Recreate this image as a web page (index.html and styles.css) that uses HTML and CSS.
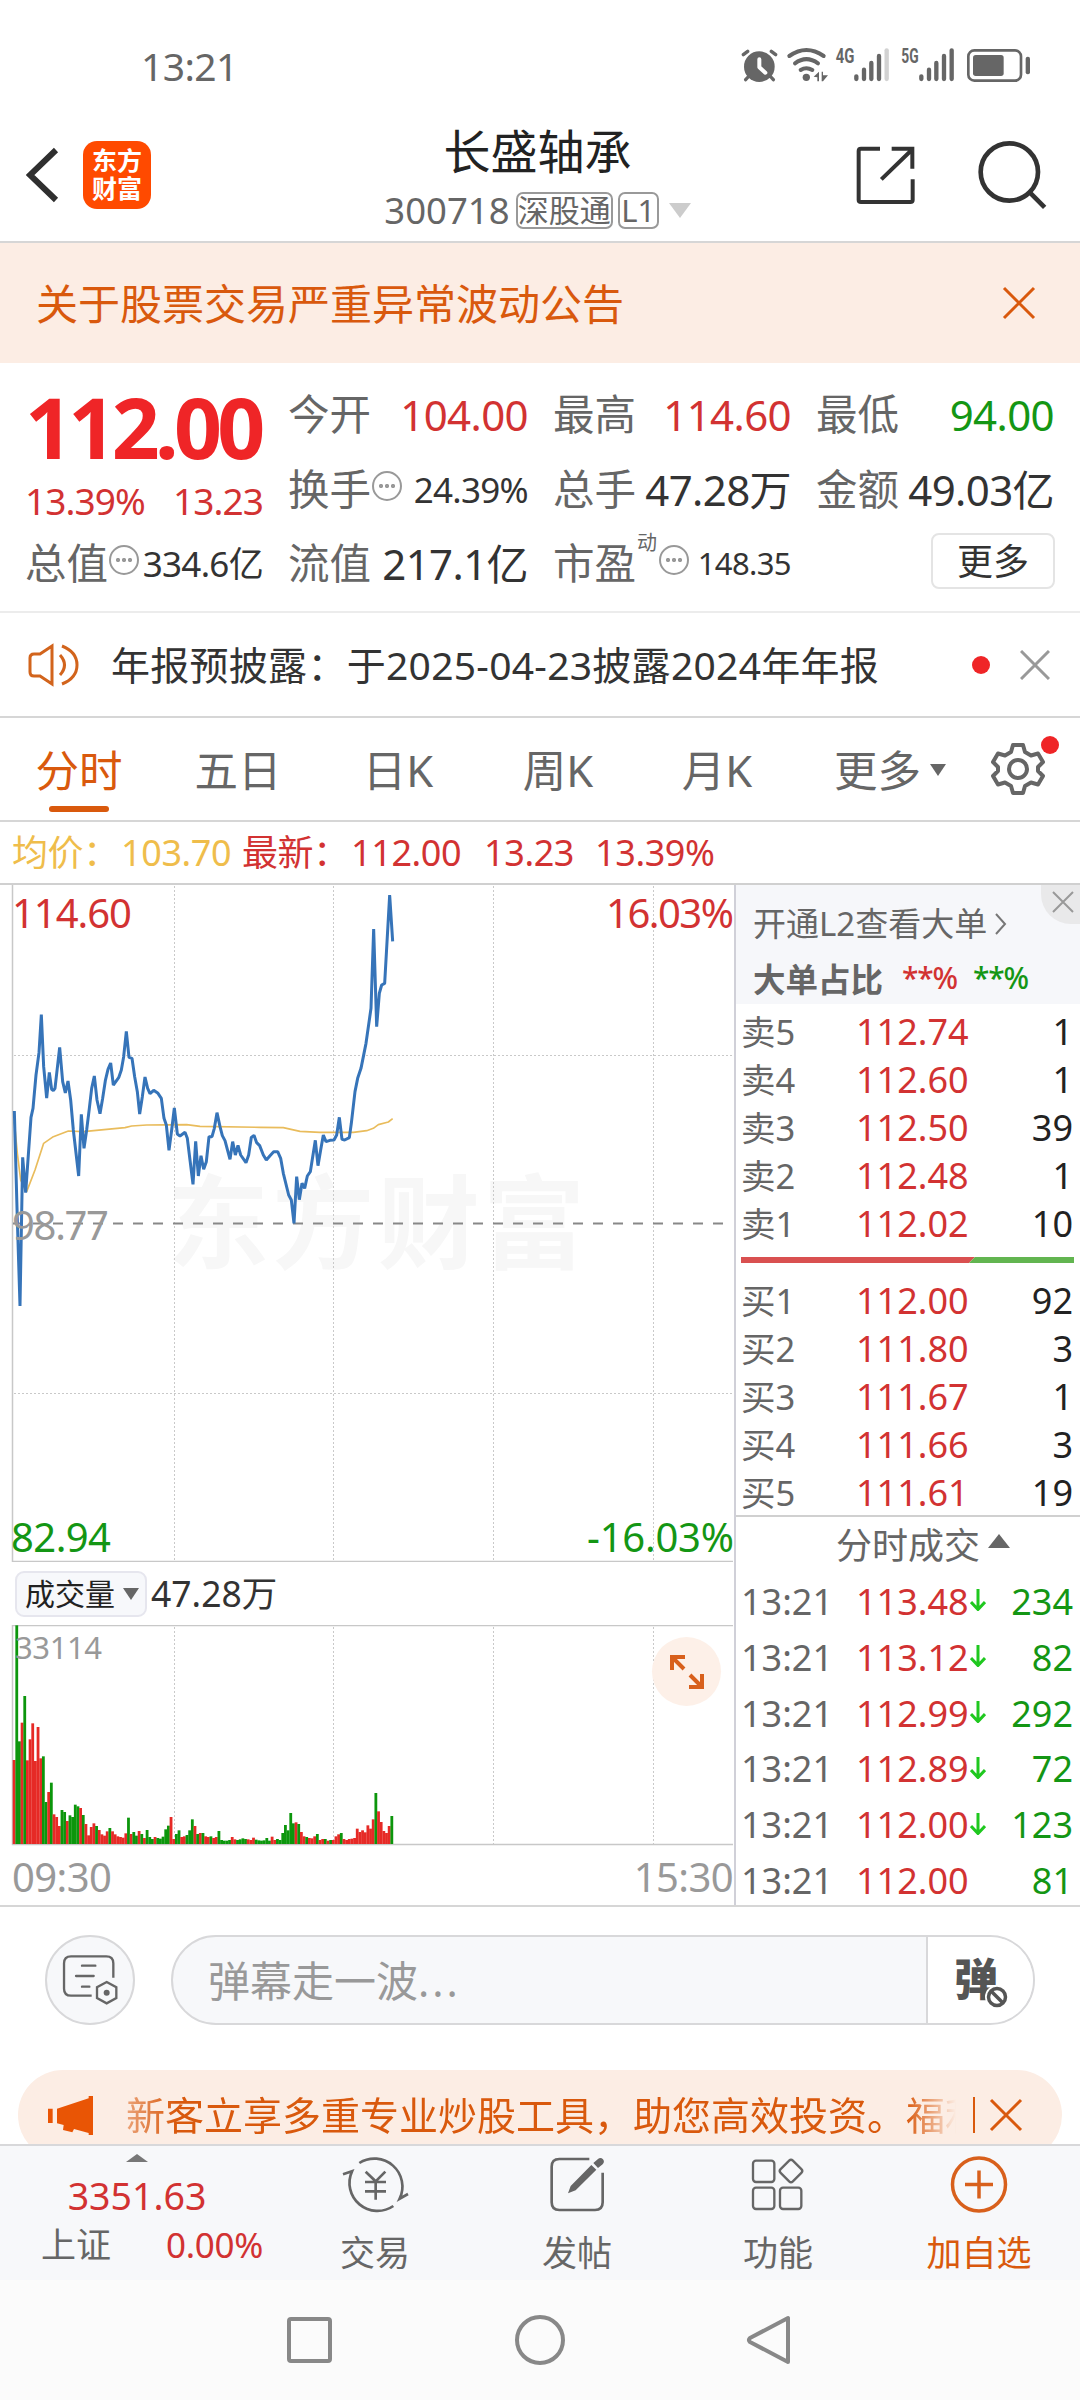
FILE: index.html
```html
<!DOCTYPE html>
<html lang="zh-CN">
<head>
<meta charset="utf-8">
<title>长盛轴承 300718</title>
<link rel="stylesheet" href="styles.css">
</head>
<body>
<div class="phone">
  <div class="status">
    <span class="clock">13:21</span>
    <svg class="status-icons" viewBox="15 18 885 111" width="295" height="37" fill="#666" stroke="none">
      <circle cx="73" cy="80" r="46"/>
      <path d="M25 44L38 34M122 44L109 34M42 108L32 119M105 108L115 119" stroke="#666" stroke-width="10" stroke-linecap="round"/>
      <path d="M73 58V82L91 98" fill="none" stroke="#fff" stroke-width="12" stroke-linecap="round" stroke-linejoin="round"/>
      <path d="M163 48Q214 12 266 48M180 70Q214 45 249 70M197 90Q214 79 232 90" fill="none" stroke="#666" stroke-width="12" stroke-linecap="round"/>
      <circle cx="214" cy="112" r="11"/>
      <path d="M236 110L252 95V124H247V112ZM260 95H264V106H279L264 124H260Z"/>
      <text class="net" x="302" y="68" textLength="56" lengthAdjust="spacingAndGlyphs">4G</text>
      <text class="net" x="499" y="68" textLength="52" lengthAdjust="spacingAndGlyphs">5G</text>
      <g stroke="#666" stroke-width="13" stroke-linecap="round">
        <path d="M364 109V117M387 89V117M409 69V117M432 48V117"/>
        <path d="M455 31V117" stroke="#d2d2d2"/>
        <path d="M559 109V117M582 89V117M604 69V117M627 48V117M650 31V117"/>
      </g>
      <rect x="700" y="31" width="158" height="91" rx="18" fill="none" stroke="#666" stroke-width="8"/>
      <rect x="714" y="45" width="92" height="63" rx="8"/>
      <rect x="872" y="50" width="13" height="53" rx="6"/>
    </svg>
  </div>

  <header class="header">
    <svg class="back" viewBox="0 0 34 58" width="34" height="58"><path d="M30 4L4 29L30 54" fill="none" stroke="#2f2f2f" stroke-width="6"/></svg>
    <div class="logo"><span>东方</span><span>财富</span></div>
    <div class="title">
      <h1>长盛轴承</h1>
      <div class="sub"><span class="code">300718</span><span class="tag">深股通</span><span class="tag lv">L1</span><i class="tri-down"></i></div>
    </div>
    <svg class="share" viewBox="366 318 177 177" width="59" height="59" fill="none" stroke="#333" stroke-width="12"><path d="M438 326H381Q374 326 374 333V480Q374 486 381 486H529Q536 486 536 480V418M473 326H535V386M442 418L533 330"/></svg>
    <svg class="search" viewBox="726 300 210 210" width="70" height="70" fill="none" stroke="#333" stroke-width="14"><circle cx="823" cy="396" r="86"/><path d="M885 458L929 502"/></svg>
  </header>

  <div class="notice"><span>关于股票交易严重异常波动公告</span>
    <svg viewBox="0 0 34 34" width="34" height="34"><path d="M2 2L32 32M32 2L2 32" stroke="#d9590d" stroke-width="3"/></svg>
  </div>

  <section class="quote">
    <div class="quote-top">
      <div class="last">
        <div class="price">112.00</div>
        <div class="chg"><span>13.39%</span><span>13.23</span></div>
      </div>
      <div class="cells">
        <div class="cell"><label>今开</label><b class="up">104.00</b></div>
        <div class="cell"><label>最高</label><b class="up">114.60</b></div>
        <div class="cell"><label>最低</label><b class="down">94.00</b></div>
        <div class="cell"><label>换手<i class="info"></i></label><b class="m">24.39%</b></div>
        <div class="cell"><label>总手</label><b>47.28万</b></div>
        <div class="cell"><label>金额</label><b>49.03亿</b></div>
      </div>
    </div>
    <div class="quote-row">
      <div class="cell"><label>总值<i class="info"></i></label><b class="m">334.6亿</b></div>
      <div class="cell"><label>流值</label><b>217.1亿</b></div>
      <div class="cell"><label>市盈<sup>动</sup><i class="info"></i></label><b class="s">148.35</b></div>
      <div class="cell end"><button class="more">更多</button></div>
    </div>
  </section>

  <div class="news">
    <svg viewBox="0 0 52 44" width="52" height="44" fill="none" stroke="#d2641c" stroke-width="3"><path d="M24 3V41L12 33H6Q2 33 2 29V15Q2 11 6 11H12ZM32 12Q41 22 32 32M34 3Q49 9 49 22T34 41"/></svg>
    <span class="news-text">年报预披露：于2025-04-23披露2024年年报</span>
    <i class="dot"></i>
    <svg viewBox="0 0 30 30" width="30" height="30"><path d="M1 1L29 29M29 1L1 29" stroke="#999" stroke-width="3"/></svg>
  </div>

  <nav class="tabs">
    <a class="tab on">分时</a><a class="tab">五日</a><a class="tab">日K</a><a class="tab">周K</a><a class="tab">月K</a><a class="tab">更多<i class="tri-s"></i></a>
    <span class="gear"><svg viewBox="0 0 54 54" width="54" height="54" fill="none" stroke="#666" stroke-width="4" stroke-linejoin="round"><path d="M22 3H32L34 10L40 13.500L47 11.500L52 20L47 25V29L52 34L47 42.500L40 40.500L34 44L32 51H22L20 44L14 40.500L7 42.500L2 34L7 29V25L2 20L7 11.500L14 13.500L20 10Z"/><circle cx="27" cy="27" r="9"/></svg><i class="dot"></i></span>
  </nav>

  <div class="avg"><span class="y w1">均价：</span><span class="y w2">103.70</span><span class="w3">最新：</span><span class="w4">112.00</span><span class="w5">13.23</span><span>13.39%</span></div>

  <main class="market">
    <div class="left">
      <svg class="chart" viewBox="0 885 734 677" width="734" height="677">
        <text class="mark" x="167" y="1261" textLength="418">东方财富</text>
        <g class="grid"><path d="M174.500 886V1561M333.500 886V1561M493.500 886V1561M653.500 886V1561M14 1055.500H733M14 1393.500H733"/></g>
        <path class="frame" d="M12.500 885V1561.500H733"/>
        <path d="M13 1223.500H733" stroke="#888" stroke-width="2" stroke-dasharray="10 10"/>
        <g transform="translate(0 870) scale(.33333)" fill="none" stroke-linejoin="bevel">
          <path stroke="#e9bc5c" stroke-width="5" d="M43 755L52 850L62 930L80 965L105 900L131 820L160 800L205 783L250 785L320 778L375 773L395 768L440 765L560 764L600 769L780 772L850 773L900 784L960 787L1060 787L1100 782L1120 775L1135 764L1165 756L1178 746"/>
          <path stroke="#3674b9" stroke-width="9" d="M43 723L52 1050L60 1308L68 862L77 968L93 742L99 715L108 615L117 548L124 434L131 590L140 684L148 607L155 658L160 662L165 655L179 532L188 635L196 669L204 633L212 690L220 780L236 918L244 733L252 835L260 780L268 715L275 655L283 618L291 690L300 731L308 685L316 632L324 598L332 579L340 645L356 623L364 600L371 560L379 484L387 562L396 565L404 620L412 665L419 732L427 680L435 621L443 655L450 671L461 661L474 670L484 685L492 745L499 765L507 841L515 780L523 714L532 792L540 798L555 787L562 805L570 870L579 943L587 814L595 918L603 857L611 898L619 875L627 800L636 800L643 775L651 728L660 770L667 797L675 812L690 868L698 815L706 855L714 826L722 855L738 878L746 855L754 802L762 796L770 818L779 827L790 855L799 870L810 857L821 845L833 845L842 865L850 910L866 975L874 990L882 1060L890 920L898 989L906 940L914 955L922 918L931 905L946 811L954 887L962 840L970 795L978 815L990 811L1002 810L1010 795L1018 742L1026 808L1034 810L1048 803L1054 760L1065 665L1073 625L1083 595L1098 520L1113 415L1121 177L1130 470L1138 370L1145 345L1154 340L1169 75L1178 214"/>
        </g>
        <text class="ax up" x="12" y="928" textLength="120">114.60</text>
        <text class="ax up" x="606" y="928" textLength="128">16.03%</text>
        <text class="ax gray" x="12" y="1240" textLength="97">98.77</text>
        <text class="ax down" x="11" y="1552" textLength="100">82.94</text>
        <text class="ax down" x="587" y="1552" textLength="147">-16.03%</text>
      </svg>
      <div class="vol-head"><span class="vol-btn">成交量<i class="tri-s"></i></span><span class="vol-val">47.28万</span></div>
      <div class="vol">
        <svg viewBox="0 1625 734 221" width="734" height="221">
          <g class="grid"><path d="M174.500 1627V1844M333.500 1627V1844M493.500 1627V1844M653.500 1627V1844"/></g>
          <path class="frame" d="M733 1625.500H12.500V1844.500H733"/>
          <g id="bars"></g>
          <text class="volmax" x="15" y="1659" textLength="87">33114</text>
        </svg>
        <span class="expand"><svg viewBox="0 0 36 36" width="36" height="36" fill="none" stroke="#d8601c" stroke-width="4"><path d="M16 3H3V16M3 3L15 15M20 33H33V20M33 33L21 21"/></svg></span>
      </div>
      <div class="times"><span>09:30</span><span>15:30</span></div>
    </div>
    <aside class="side">
      <div class="l2">
        <div class="l2-a">开通L2查看大单<svg viewBox="0 0 12 22" width="12" height="22"><path d="M1 1L10 11L1 21" fill="none" stroke="#777" stroke-width="2"/></svg></div>
        <div class="l2-b"><span>大单占比</span><em class="up">**%</em><em class="down">**%</em></div>
        <span class="l2-x"><svg viewBox="0 0 22 22" width="22" height="22"><path d="M1 1L21 21M21 1L1 21" stroke="#999" stroke-width="2"/></svg></span>
      </div>
      <div class="book">
        <div><span>卖5</span><b>112.74</b><u>1</u></div>
        <div><span>卖4</span><b>112.60</b><u>1</u></div>
        <div><span>卖3</span><b>112.50</b><u>39</u></div>
        <div><span>卖2</span><b>112.48</b><u>1</u></div>
        <div><span>卖1</span><b>112.02</b><u>10</u></div>
      </div>
      <svg class="ratio" viewBox="0 0 333 6" width="333" height="6"><path d="M0 0H234L228 6H0Z" fill="#d95050"/><path d="M234 0H333V6H228Z" fill="#62b550"/></svg>
      <div class="book">
        <div><span>买1</span><b>112.00</b><u>92</u></div>
        <div><span>买2</span><b>111.80</b><u>3</u></div>
        <div><span>买3</span><b>111.67</b><u>1</u></div>
        <div><span>买4</span><b>111.66</b><u>3</u></div>
        <div><span>买5</span><b>111.61</b><u>19</u></div>
      </div>
      <div class="deals-head">分时成交<i class="tri-up"></i></div>
      <div class="deals">
        <div><span>13:21</span><b>113.48</b><svg class="arr" viewBox="0 0 16 22"><path d="M8 0V20M1 13L8 20.500L15 13"/></svg><u>234</u></div>
        <div><span>13:21</span><b>113.12</b><svg class="arr" viewBox="0 0 16 22"><path d="M8 0V20M1 13L8 20.500L15 13"/></svg><u>82</u></div>
        <div><span>13:21</span><b>112.99</b><svg class="arr" viewBox="0 0 16 22"><path d="M8 0V20M1 13L8 20.500L15 13"/></svg><u>292</u></div>
        <div><span>13:21</span><b>112.89</b><svg class="arr" viewBox="0 0 16 22"><path d="M8 0V20M1 13L8 20.500L15 13"/></svg><u>72</u></div>
        <div><span>13:21</span><b>112.00</b><svg class="arr" viewBox="0 0 16 22"><path d="M8 0V20M1 13L8 20.500L15 13"/></svg><u>123</u></div>
        <div><span>13:21</span><b>112.00</b><i class="arr"></i><u>81</u></div>
      </div>
    </aside>
  </main>

  <div class="danmu">
    <span class="round"><svg viewBox="130 94 170 154" width="56.700" height="51.300" fill="none" stroke="#666" stroke-width="7"><path d="M284 165V122Q284 101 263 101H157Q136 101 136 122V198Q136 219 157 219H219"/><path d="M190 129H230M172 160H225M190 192H212" stroke-linecap="round"/><path d="M264 178L293 194V226L264 242L235 226V194Z"/><circle cx="264" cy="210" r="9" fill="#666" stroke="none"/></svg></span>
    <div class="input"><span class="ph">弹幕走一波<span class="dots">...</span></span><span class="dm"><span>弹</span><svg viewBox="0 0 24 24" width="24" height="24"><circle cx="12" cy="12" r="8.500" fill="#fff" stroke="#fff" stroke-width="7"/><path d="M6.500 6.500L17.500 17.500" stroke="#555" stroke-width="3.500"/><circle cx="12" cy="12" r="8.500" fill="none" stroke="#555" stroke-width="3.500"/></svg></span></div>
  </div>

  <div class="promo-wrap">
    <div class="promo">
      <svg viewBox="84 510 135 117" width="45" height="39" fill="#e95505"><path d="M84 548H98V591H84ZM111 548L206 517V510H219V627H206V621L162 609L157 619L129 612L131 597L111 592Z"/></svg>
      <span class="promo-text">新客立享多重专业炒股工具，助您高效投资。福利</span>
      <i class="bar"></i>
      <svg viewBox="0 0 34 34" width="34" height="34"><path d="M2 2L32 32M32 2L2 32" stroke="#d9590d" stroke-width="3"/></svg>
    </div>
  </div>

  <footer class="bottom">
    <div class="index"><i class="tri-up"></i><div class="idx">3351.63</div><div class="idx2"><span>上证</span><em>0.00%</em></div></div>
    <div class="item"><svg viewBox="36 40 201 180" width="67" height="60" fill="none" stroke="#666" stroke-width="8"><path d="M88 67A84 84 0 0 1 209 174L234 160M190 196A84 84 0 0 1 66 92L39 101M107 93L137 122L166 93M137 122V177M105 124H168M105 152H168"/></svg><span>交易</span></div>
    <div class="item"><svg viewBox="654 40 174 180" width="58" height="60"><path d="M778 55H688Q665 55 665 78V185Q665 208 688 208H795Q818 208 818 185V96" fill="none" stroke="#666" stroke-width="8"/><path d="M714 158L722 136L784 73L799 87L737 149ZM790 67L804 55Q812 49 819 56Q825 63 818 71L804 82Z" fill="#666"/></svg><span>发帖</span></div>
    <div class="item"><svg viewBox="1262 40 168 180" width="56" height="60" fill="none" stroke="#666" stroke-width="7"><rect x="1271" y="60" width="64" height="64" rx="9"/><rect x="1271" y="141" width="64" height="64" rx="9"/><rect x="1352" y="141" width="64" height="64" rx="9"/><rect x="1359" y="65" width="52" height="52" rx="8" transform="rotate(45 1385 91)"/></svg><span>功能</span></div>
    <div class="item hot"><svg viewBox="0 0 60 60" width="60" height="60" fill="none" stroke="#d8601c" stroke-width="3.500"><circle cx="30" cy="30.500" r="26.500"/><path d="M16 30.500H44M30 16.500V44.500"/></svg><span>加自选</span></div>
  </footer>

  <div class="sysnav">
    <svg viewBox="287 2315 504 52" width="504" height="52" fill="none" stroke="#888" stroke-width="4"><rect x="289" y="2319" width="41" height="42" rx="2"/><circle cx="540" cy="2340" r="23"/><path d="M788 2318V2362L750 2342Q748 2340 750 2338Z" stroke-linejoin="round"/></svg>
  </div>
</div>
<script src="chart.js"></script>
</body>
</html>
```
FILE: styles.css
```css
* { box-sizing: border-box; }
body { margin: 0; background: #fff; font-family: "Noto Sans", "Noto Sans CJK SC", sans-serif; color: #333; }
b, em, u, i, h1 { font-weight: 400; font-style: normal; text-decoration: none; margin: 0; }
svg { display: block; flex: none; }
.phone { width: 1080px; height: 2400px; overflow: hidden; display: flex; flex-direction: column; line-height: 1; white-space: nowrap; }
.phone > * { flex: none; }
.up { color: #d23232; }
.down { color: #149614; }

.status { height: 120px; padding: 0 45px 0 141px; display: flex; justify-content: space-between; }
.clock { font-size: 39px; line-height: 60px; margin-top: 36px; letter-spacing: -.6px; color: #666; }
.status-icons { margin-top: 46px; overflow: visible; }
.net { font: 700 60px Roboto, sans-serif; }

.header { height: 123px; display: flex; border-bottom: 2px solid #d6d6d6; }
.back { margin: 26px 0 0 26px; }
.logo { width: 68px; height: 68px; margin: 21px 0 0 23px; border-radius: 14px; background: #ff4a00; color: #fff; font-size: 25px; font-weight: 700; line-height: 28px; padding-top: 5px; display: flex; flex-direction: column; align-items: center; }
.title { flex: 1; display: flex; flex-direction: column; align-items: center; padding-left: 68px; }
.title h1 { font-size: 47px; line-height: 60px; color: #222; margin-top: 1px; }
.sub { display: flex; align-items: center; height: 40px; margin-top: 9px; color: #666; }
.code { font-size: 36.500px; line-height: 40px; margin-right: 6px; }
.tag { border: 2px solid #999; border-radius: 7px; font-size: 31px; line-height: 33px; height: 37px; width: 97px; text-align: center; margin-right: 5px; }
.tag.lv { width: 41px; margin-right: 10px; }
.tri-down { border: 11px solid transparent; border-top: 15px solid #ccc; border-bottom: 0; }
.share { margin: 26px 62px 0 0; }
.search { margin: 20px 33px 0 0; }

.notice { height: 120px; background: #fcede4; color: #d9590d; display: flex; align-items: center; justify-content: space-between; padding: 2px 44px 0 36px; font-size: 42px; }
.notice svg { margin-top: -2px; }

.quote { height: 250px; border-bottom: 2px solid #ececec; }
.quote-top { display: flex; padding-left: 25px; height: 165px; }
.last { width: 263px; color: #ef2527; }
.price { font-size: 84px; font-weight: 700; line-height: 80px; letter-spacing: -4.700px; margin-top: 24px; }
.chg { display: flex; justify-content: space-between; width: 238px; font-size: 37px; line-height: 40px; margin-top: 14px; letter-spacing: -.9px; color: #d23232; }
.cells { display: grid; grid-template-columns: 240px 238px 238px; column-gap: 25px; grid-auto-rows: 75px; padding-top: 14px; }
.quote-row { display: grid; grid-template-columns: 238px 240px 238px 238px; column-gap: 25px; padding-left: 25px; height: 75px; margin-top: -2px; }
.cell { display: flex; align-items: center; justify-content: space-between; line-height: 75px; }
.cell label { font-size: 41.500px; color: #666; display: flex; align-items: center; }
.cell b { font-size: 42px; letter-spacing: -.6px; }
.cell b.m { font-size: 35px; letter-spacing: -.7px; }
.cell b.s { font-size: 31px; letter-spacing: -.6px; }
.cell sup { font-size: 20px; line-height: 20px; margin: -42px 1px 0 1px; }
.cell.end { justify-content: flex-end; }
.info { width: 30px; height: 30px; margin: -8px 0 0 1px; border: 2px solid #999; border-radius: 50%; background: radial-gradient(circle, #999 1.800px, transparent 2.400px) 4px 9px / 6px 8px no-repeat, radial-gradient(circle, #999 1.800px, transparent 2.400px) 10px 9px / 6px 8px no-repeat, radial-gradient(circle, #999 1.800px, transparent 2.400px) 16px 9px / 6px 8px no-repeat; }
.more { width: 124px; height: 56px; margin: -6px -1px 0 0; border: 2px solid #e4e4e4; border-radius: 8px; background: #fff; font: 36px/48px "Noto Sans CJK SC", sans-serif; color: #333; padding: 0 0 4px; }

.news { height: 105px; border-bottom: 2px solid #d6d6d6; display: flex; align-items: center; padding: 0 30px 0 28px; }
.news-text { font-size: 39px; margin-left: 31px; flex: 1; letter-spacing: .28px; }
.dot { width: 18px; height: 18px; border-radius: 50%; background: #ef2527; }
.news .dot { margin-right: 30px; }

.tabs { height: 104px; border-bottom: 2px solid #d6d6d6; display: grid; grid-template-columns: 158px 160px 160px 160px 158px 188px 1fr; align-items: center; font-size: 43.500px; color: #666; }
.tab { text-align: center; height: 102px; line-height: 105px; position: relative; }
.tab.on { color: #d9590d; }
.tab.on::after { content: ""; position: absolute; left: 49px; bottom: 8px; width: 60px; height: 6px; border-radius: 3px; background: #d9590d; }
.tri-s { display: inline-block; border: 8px solid transparent; border-top: 12px solid #666; border-bottom: 0; margin-left: 9px; vertical-align: 11px; }
.gear { position: relative; }
.gear svg { margin-left: 7px; }
.gear .dot { position: absolute; left: 57px; top: -6px; }

.avg { height: 61px; width: 1080px; padding: 0 0 0 12px; font-size: 36px; line-height: 62px; color: #d23232; display: flex; letter-spacing: -.4px; }
.y { color: #efbd4b; }
.w1, .w3 { width: 109px; }
.w2 { width: 121px; }
.w4 { width: 133px; }
.w5 { width: 111px; }

.market { display: flex; height: 1024px; border-top: 2px solid #d0d0d0; border-bottom: 2px solid #d6d6d6; }
.left { width: 734px; }
.grid path { fill: none; stroke: #c9c9c9; stroke-width: 1; stroke-dasharray: 2 2; }
.frame { fill: none; stroke: #c8c8c8; stroke-width: 1.500; }
.mark { font: 700 102px "Noto Sans CJK SC", sans-serif; fill: #f7f7f7; }
.ax { font-size: 40px; }
.ax.up { fill: #d23232; }
.ax.down { fill: #149614; }
.ax.gray, .volmax { fill: #999; }
.volmax { font-size: 31px; }
.vol-head { height: 63px; display: flex; align-items: center; padding-left: 15px; }
.vol-btn { width: 132px; height: 46px; border: 2px solid #e6e6ee; border-radius: 9px; background: #f7f8fb; font-size: 30px; line-height: 42px; padding-left: 8px; color: #222; }
.vol-btn .tri-s { margin-left: 8px; vertical-align: 5px; }
.vol-val { font-size: 35.500px; margin-left: 4px; }
.vol { position: relative; }
.expand { position: absolute; left: 652px; top: 12px; width: 69px; height: 69px; border-radius: 50%; background: #fdf0e8; display: flex; align-items: center; justify-content: center; }
.times { display: flex; justify-content: space-between; padding: 0 1px 0 12px; height: 59px; font-size: 40px; line-height: 62px; color: #999; letter-spacing: -.6px; }

.side { width: 346px; border-left: 2px solid #d0d0d8; }
.l2 { height: 119px; background: #f6f7fa; position: relative; padding: 14px 0 0 17px; color: #666; }
.l2-a { font-size: 33px; line-height: 50px; display: flex; align-items: center; gap: 8px; }
.l2-b { font-size: 32.500px; line-height: 50px; margin-top: 4px; display: flex; }
.l2-b span { width: 149px; font-family: "Noto Sans CJK SC", sans-serif; font-weight: 600; }
.l2-b em { width: 71px; font-size: 30px; letter-spacing: -1.200px; font-weight: 500; }
.l2-x { position: absolute; right: 0; top: 0; width: 39px; height: 39px; border-bottom-left-radius: 30px; background: #e9e9ea; display: flex; align-items: center; justify-content: center; padding: 0 0 6px 4px; }
.book > div { display: grid; grid-template-columns: 115px 130px 1fr; padding: 0 7px 0 5px; height: 48px; line-height: 48px; font-size: 36px; }
.book span { color: #666; font-size: 34.500px; }
.book b, .deals b { color: #d23232; }
.book u, .deals u { text-align: right; color: #222; }
.l2 + .book { padding-top: 4px; }
.ratio { margin: 9px 0 14px 5px; }
.deals-head { border-top: 2px solid #d0d0d0; margin-top: -2px; height: 59px; line-height: 58px; font-size: 36px; color: #666; padding-left: 100px; display: flex; align-items: center; }
.tri-up { border: 11px solid transparent; border-bottom: 14px solid #666; border-top: 0; }
.deals-head .tri-up { margin: -10px 0 0 8px; }
.deals > div { display: grid; grid-template-columns: 115px 114px 16px 1fr; align-items: center; padding: 0 7px 0 5px; height: 55.800px; line-height: 55.800px; font-size: 36px; }
.deals span { color: #666; }
.deals u { color: #149614; }
.arr { width: 16px; height: 22px; margin-top: -3px; fill: none; stroke: #1fc81f; stroke-width: 3; }

.danmu { height: 163px; display: flex; padding: 28px 45px 0 45px; gap: 36px; }
.round { width: 90px; height: 90px; border-radius: 50%; border: 2px solid #d8d8da; background: #f7f8fa; display: flex; align-items: center; justify-content: center; }
.input { flex: 1; height: 90px; border: 2px solid #d8d8da; border-radius: 45px; background: #f7f8fa; display: flex; justify-content: space-between; overflow: hidden; }
.ph { color: #999; font-size: 42px; line-height: 88px; padding-left: 35px; }
.dots { letter-spacing: 3px; }
.dm { width: 107px; border-left: 2px solid #d8d8da; background: #fff; position: relative; font-size: 44px; font-weight: 900; line-height: 80px; color: #555; padding-left: 26px; font-family: "Noto Sans CJK SC", sans-serif; }
.dm svg { position: absolute; left: 57px; top: 48px; }

.promo-wrap { height: 74px; overflow: hidden; padding: 0 18px; }
.promo { height: 90px; border-radius: 45px; background: #fcede4; color: #d9590d; display: flex; align-items: center; padding: 0 30px; }
.promo-text { width: 832px; margin-left: 33px; overflow: hidden; font-size: 39px; line-height: 60px; -webkit-mask-image: linear-gradient(90deg, rgba(0,0,0,.5), #000 50px, #000 780px, transparent 830px); mask-image: linear-gradient(90deg, rgba(0,0,0,.5), #000 50px, #000 780px, transparent 830px); }
.bar { width: 2px; height: 36px; background: #d9590d; margin: 0 14px 0 15px; }

.bottom { height: 136px; background: #f7f8fa; border-top: 2px solid #d8d8da; display: grid; grid-template-columns: 274px 202px 202px 200px 202px; color: #666; font-size: 35px; }
.index { display: flex; flex-direction: column; align-items: center; padding-top: 8px; }
.index .tri-up { border-width: 0 11px 8px; border-bottom-color: #777; }
.idx { color: #d23232; font-size: 37.500px; line-height: 44px; margin-top: 12px; }
.idx2 { display: flex; justify-content: space-between; width: 222px; line-height: 50px; margin: 2px 0 0 30px; }
.idx2 em { color: #d23232; letter-spacing: -.3px; }
.item { display: flex; flex-direction: column; align-items: center; padding-top: 8px; }
.item span { line-height: 50px; margin-top: 14px; }
.hot { color: #d9590d; }

.sysnav { height: 120px; background: #fbfbfb; padding: 35px 0 0 287px; }
```
FILE: chart.js
```js
// Minute volume: direction letter followed by the bar height, in thirds of a pixel.
const volume = 'r252 g656 g308 r364 g444 r251 r314 r362 r249 r351 r257 g263 g126 r156 g184 r89 r81 r54 g102 g96 r69 g86 g81 g118 g113 r108 g87 r60 r26 r51 r62 g54 r42 r29 r25 r38 g48 r38 r29 r23 r21 r19 r32 g79 r30 g36 g25 r39 g30 r18 g42 g21 g15 r21 g18 g16 g22 g44 g55 r81 r15 g30 g41 r21 r23 g27 g41 g74 r54 g30 r33 g33 r23 r21 g23 r18 r21 g39 g12 g10 g10 g12 r21 r14 g12 g14 g17 g15 r14 r12 r19 g13 g11 g10 g11 g18 g10 r22 r12 g15 g12 g33 g57 g41 g93 g62 r65 g60 r36 r23 g21 r18 r17 r23 g30 r12 r15 g15 r10 g12 r12 r23 r29 g33 r15 r12 r15 r16 r18 r46 r36 r41 r35 r56 r46 r74 g153 r98 r66 r39 r33 r54 g84';
const bars = document.getElementById('bars');
volume.split(' ').forEach((item, i) => {
  const height = Number(item.slice(1)) / 3;
  const rect = document.createElementNS('http://www.w3.org/2000/svg', 'rect');
  rect.setAttribute('x', 12.7 + i * 2.66);
  rect.setAttribute('y', 1844 - height);
  rect.setAttribute('width', 2.8);
  rect.setAttribute('height', height);
  rect.setAttribute('fill', item[0] === 'r' ? '#e62a26' : '#0c960c');
  bars.appendChild(rect);
});
```
